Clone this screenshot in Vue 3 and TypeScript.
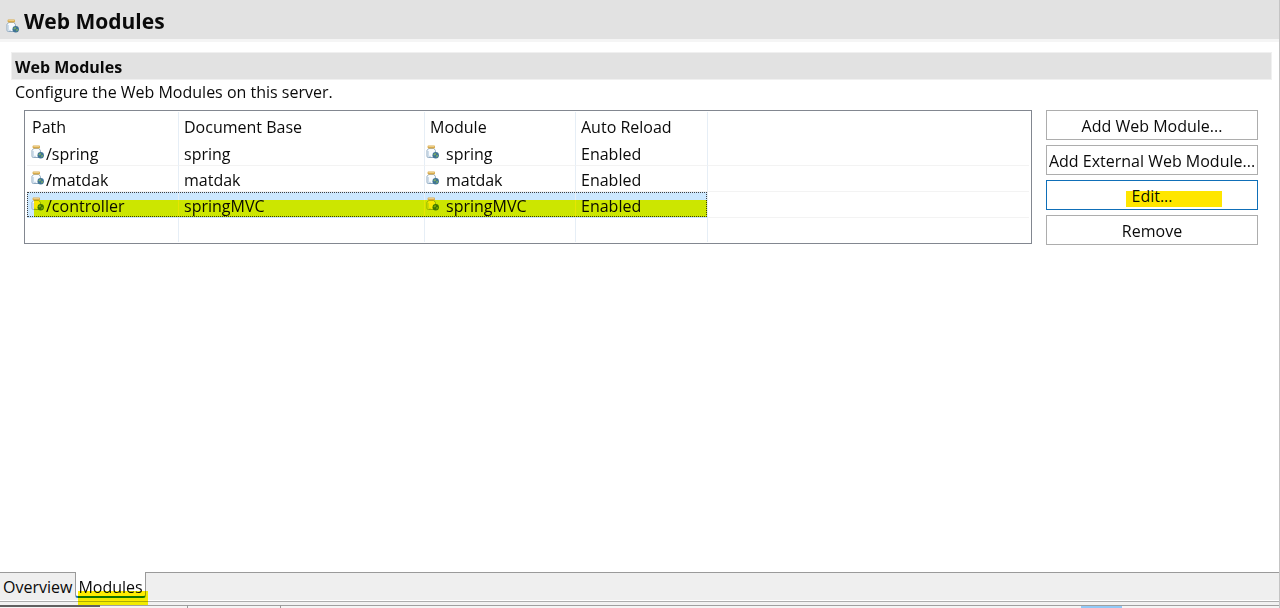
<script setup lang="ts">
import { ref } from 'vue'

interface WebModule {
  path: string
  docBase: string
  module: string
  reload: string
}

const modules: WebModule[] = [
  { path: '/spring', docBase: 'spring', module: 'spring', reload: 'Enabled' },
  { path: '/matdak', docBase: 'matdak', module: 'matdak', reload: 'Enabled' },
  { path: '/controller', docBase: 'springMVC', module: 'springMVC', reload: 'Enabled' },
]

const selected = ref(2)
const tab = ref('Modules')
</script>

<template>
  <svg class="defs" width="0" height="0" aria-hidden="true">
    <symbol id="jar" viewBox="0 0 13 14">
      <path d="M2.8 3.4 L1 5.4 V11.2 Q1 12.5 2.3 12.5 H8 Q9.4 12.5 9.4 11.2 V5.4 L7.8 3.4 Z" fill="#f8fbfe" stroke="#8fa9c0" stroke-width="1" />
      <path d="M2.3 6 V11.3 H5" fill="none" stroke="#c3d6e6" stroke-width="1" />
      <rect x="1.6" y="0.6" width="7.4" height="2.8" rx="0.8" fill="#d9ab4d" />
      <path d="M2.4 1.5 H8.2" stroke="#f0d596" stroke-width="0.8" />
      <circle cx="9.7" cy="10.3" r="3.2" fill="#3f7396" />
      <path d="M7.4 9.6 Q8.2 7.8 10 8.2 L9.8 9.8 L8.4 10.6 Z M10.2 10.3 L12 10 Q12.2 11.6 10.4 12.6 Z" fill="#7db062" />
    </symbol>
  </svg>
  <div class="editor">
    <header class="title">
      <svg class="jar"><use href="#jar" /></svg>
      <h1>Web Modules</h1>
    </header>
    <main class="section">
      <h2>Web Modules</h2>
      <p>Configure the Web Modules on this server.</p>
      <div class="body">
        <div class="grid">
          <table>
            <colgroup>
              <col class="c-path" /><col class="c-doc" /><col class="c-mod" /><col class="c-reload" /><col />
            </colgroup>
            <thead>
              <tr><th>Path</th><th>Document Base</th><th>Module</th><th>Auto Reload</th><th></th></tr>
            </thead>
            <tbody>
              <tr v-for="(m, i) in modules" :key="m.path" :class="{ selected: i === selected }" @click="selected = i">
                <td class="path">
                  <svg class="jar"><use href="#jar" /></svg>{{ m.path }}
                  <span v-if="i === selected" class="focus"></span>
                </td>
                <td>{{ m.docBase }}</td>
                <td class="mod"><svg class="jar"><use href="#jar" /></svg>{{ m.module }}</td>
                <td>{{ m.reload }}</td>
                <td class="rest"></td>
              </tr>
              <tr class="blank"><td></td><td></td><td></td><td></td><td></td></tr>
            </tbody>
          </table>
        </div>
        <div class="actions">
          <button type="button">Add Web Module...</button>
          <button type="button">Add External Web Module...</button>
          <button type="button" class="default">Edit...</button>
          <button type="button">Remove</button>
        </div>
      </div>
    </main>
    <nav class="tabs">
      <button type="button" :class="{ active: tab === 'Overview' }" @click="tab = 'Overview'">Overview</button>
      <button type="button" :class="{ active: tab === 'Modules' }" @click="tab = 'Modules'">Modules</button>
      <span class="filler"></span>
    </nav>
    <footer class="dock">
      <span class="dock-tab"></span><span class="dock-gap first"></span><span class="dock-gap second"></span>
      <span class="dock-space"></span><span class="dock-tool"></span><span class="dock-end"></span>
    </footer>
  </div>
</template>

<style>
body { margin: 0; background: #fff; }
</style>

<style scoped>
* { box-sizing: border-box; }
.defs { position: absolute; }
.editor {
  min-height: 100vh;
  display: flex;
  flex-direction: column;
  background: #fff;
  color: #0a0a0a;
  font: 16px/24px "Open Sans", "Noto Sans", sans-serif;
  border-right: 1px solid #c4c4c4;
}
.jar { width: 13px; height: 14px; flex: none; }
.title {
  display: flex;
  align-items: center;
  gap: 5px;
  height: 42px;
  padding: 2px 6px 0;
  background: #e2e2e2;
  border-bottom: 3px solid #f5f5f5;
}
.title .jar { margin-top: 10px; }
h1 { margin: 0; font-size: 21px; line-height: 28px; font-weight: 700; }
.section { flex: 1; padding: 10px 7px 0 11px; }
h2 {
  margin: 0;
  padding: 2px 3px 0;
  font-size: 16px;
  line-height: 24px;
  font-weight: 700;
  background: #e2e2e2;
  border: 1px solid #f0f0f0;
}
p { margin: 0; padding: 0 4px; }
.body { display: flex; align-items: flex-start; gap: 14px; padding: 6px 14px 0 13px; }
.grid { flex: 1; min-width: 0; border: 1px solid #828790; padding: 1px 2px; }
table { width: 100%; table-layout: fixed; border-collapse: separate; border-spacing: 0; }
.c-path { width: 152px; }
.c-doc { width: 246px; }
.c-mod { width: 151px; }
.c-reload { width: 132px; }
th, td {
  padding: 0 5px;
  height: 26px;
  text-align: left;
  font-weight: 400;
  white-space: nowrap;
  border-right: 1px solid #e6eef6;
  border-bottom: 1px solid #f3f3f3;
}
th { height: 28px; padding-top: 2px; border-bottom: 0; }
td { padding-top: 3px; line-height: 22px; }
th:last-child, td:last-child { border-right: 0; }
tr { position: relative; }
td .jar { vertical-align: 1px; }
.path { padding-left: 4px; }
.path .jar { margin-right: 2px; }
.mod { padding-left: 1px; }
.mod .jar { margin-right: 7px; }
.selected td:not(.rest) { background: #cce8ff; border-bottom-color: #cce8ff; }
.blank td { height: 24px; padding-top: 0; border-bottom: 0; }
.focus { position: absolute; left: 0; top: 0; width: 680px; height: 25px; border: 1px dotted #404040; }
.focus::after {
  content: "";
  position: absolute;
  inset: 7px -1px -1px 6px;
  background: #ffe600;
  mix-blend-mode: darken;
}
.actions { display: flex; flex-direction: column; gap: 5px; width: 212px; }
button { font: inherit; color: inherit; }
.actions button {
  height: 30px;
  padding: 2px 0 0;
  background: #fff;
  border: 1px solid #adadad;
  white-space: nowrap;
}
.actions .default { position: relative; border-color: #0f6fb8; }
.default::after {
  content: "";
  position: absolute;
  left: 79px;
  top: 10px;
  width: 96px;
  height: 16px;
  background: #ffe600;
  mix-blend-mode: darken;
}
.tabs { display: flex; height: 28px; background: #efefef; }
.tabs button {
  position: relative;
  padding: 0 3px;
  border: 0;
  border-top: 1px solid #9a9a9a;
  background: #efefef;
}
.tabs .active {
  height: 26px;
  border: 1px solid #9a9a9a;
  border-top: 0;
  border-bottom: 2px solid #1173b8;
  border-radius: 0 0 3px 3px;
  padding: 3px 2px 0;
  background: #fff;
}
.active::after {
  content: "";
  position: absolute;
  left: 2px;
  right: -3px;
  top: 19px;
  height: 14px;
  background: #ffec00;
  mix-blend-mode: darken;
}
.filler { flex: 1; border-top: 1px solid #9a9a9a; }
.dock {
  display: flex;
  height: 8px;
  padding-top: 5px;
  background: linear-gradient(#fff 0 1px, #adadad 1px 2px, #f2f2f2 2px 5px, #a0a0a0 5px 6px, #f5f5f5 6px);
}
.dock-tab { width: 100px; background: #606060; height: 2px; }
.dock-gap { border-right: 1px solid #999; }
.first { width: 88px; }
.second { width: 93px; }
.dock-space { flex: 1; }
.dock-tool { width: 41px; margin-top: 1px; background: #91c9f7; }
.dock-end { width: 157px; }
</style>
